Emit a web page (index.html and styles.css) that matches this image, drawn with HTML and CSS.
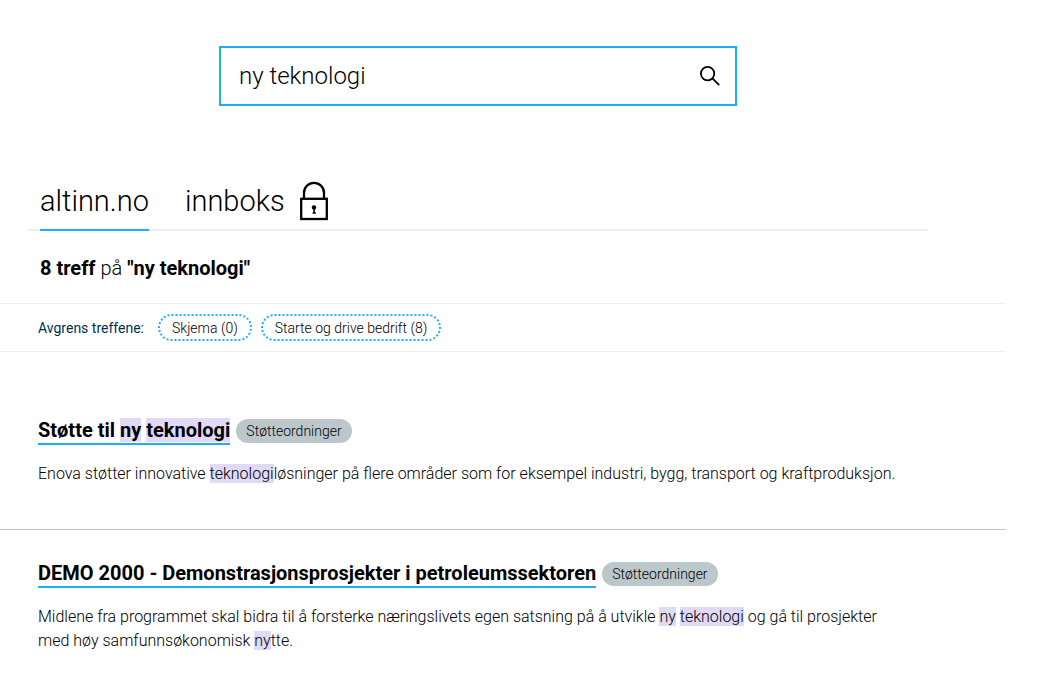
FILE: index.html
```html
<!DOCTYPE html>
<html lang="nb">
<head>
<meta charset="utf-8">
<meta name="viewport" content="width=device-width, initial-scale=1">
<title>Søk - altinn.no</title>
<link rel="stylesheet" href="styles.css">
</head>
<body>
<main class="page">
  <header class="top">
    <form class="search" role="search">
      <input class="search-input" type="text" aria-label="Søk" value="ny teknologi">
      <button class="search-button" type="submit" aria-label="Søk">
        <svg viewBox="0 0 22 22" width="22" height="22" fill="none" stroke="#000" stroke-width="1.8"><circle cx="8.6" cy="8.6" r="6.7"/><path d="M13.4 13.4 20.2 20.2"/></svg>
      </button>
    </form>
    <nav class="tabs">
      <a class="tab tab-active" href="#">altinn.no</a>
      <a class="tab" href="#">innboks
        <svg class="lock" viewBox="0 0 30 40" width="30" height="40"><path d="M5 18V11.8a10 10 0 0 1 20 0V18" fill="none" stroke="#000" stroke-width="2.3"/><rect x="2.2" y="17.8" width="25.6" height="20.2" fill="none" stroke="#000" stroke-width="2.3"/><circle cx="15" cy="26.4" r="2.2"/><path d="M14.3 26h1.6v5.2h1v1.6h-3.4v-1.4h.8z"/></svg>
      </a>
    </nav>
    <h1 class="summary">8 treff <span class="light">på</span> "ny teknologi"</h1>
  </header>
  <section class="filters">
    <span class="filter-label">Avgrens treffene:</span>
    <button class="filter" type="button">Skjema (0)</button>
    <button class="filter" type="button">Starte og drive bedrift (8)</button>
  </section>
  <section class="results">
    <article class="result">
      <div class="result-head">
        <h2 class="result-title"><a class="result-link" href="#">Støtte til <mark>ny</mark> <mark>teknologi</mark></a></h2>
        <span class="badge">Støtteordninger</span>
      </div>
      <p class="result-text">Enova støtter innovative <mark>teknologi</mark>løsninger på flere områder som for eksempel industri, bygg, transport og kraftproduksjon.</p>
    </article>
    <article class="result">
      <div class="result-head">
        <h2 class="result-title"><a class="result-link" href="#">DEMO 2000 - Demonstrasjonsprosjekter i petroleumssektoren</a></h2>
        <span class="badge">Støtteordninger</span>
      </div>
      <p class="result-text">Midlene fra programmet skal bidra til å forsterke næringslivets egen satsning på å utvikle <mark>ny</mark> <mark>teknologi</mark> og gå til prosjekter med høy samfunnsøkonomisk <mark>ny</mark>tte.</p>
    </article>
  </section>
</main>
</body>
</html>
```
FILE: styles.css
```css
* { box-sizing: border-box; }
body {
  margin: 0;
  background: #fff;
  color: #000;
  font-family: Roboto, "Liberation Sans", sans-serif;
  font-weight: 300;
}
.page { margin-right: 41px; }
.top { padding: 46px 78px 0 28px; }
.search {
  display: flex;
  align-items: center;
  width: 100%;
  max-width: 518px;
  height: 60px;
  margin: 0 auto;
  border: 2px solid #1eaef7;
}
.search-input {
  flex: 1;
  min-width: 0;
  height: 100%;
  padding: 0 18px;
  border: 0;
  outline: 0;
  background: none;
  color: #000;
  font: inherit;
  font-size: 24px;
}
.search-button {
  display: flex;
  padding: 0 14px;
  border: 0;
  background: none;
}
.tabs {
  display: flex;
  gap: 36px;
  margin-top: 72px;
  padding-left: 12px;
  border-bottom: 2px solid #eee;
}
.tab {
  display: flex;
  align-items: center;
  gap: 14px;
  height: 53px;
  margin-bottom: -2px;
  padding-bottom: 6px;
  border-bottom: 2px solid transparent;
  color: #000;
  font-size: 29px;
  text-decoration: none;
}
.tab-active { border-bottom-color: #1eaef7; }
.summary {
  margin: 0;
  padding: 25px 12px 22px;
  font-size: 20px;
  font-weight: 700;
  line-height: 25px;
}
.light { font-weight: 300; }
.filters {
  display: flex;
  align-items: center;
  flex-wrap: wrap;
  gap: 9px;
  padding: 10px 38px;
  border-top: 1px solid #eee;
  border-bottom: 1px solid #eee;
}
.filter-label {
  margin-right: 5px;
  color: #022f51;
  font-size: 14px;
  font-weight: 400;
}
.filter {
  height: 27px;
  padding: 0 12px;
  border: 2px dotted #1eaef7;
  border-radius: 14px;
  background: #fff;
  color: #000;
  font: inherit;
  font-size: 14px;
}
.results { padding-top: 35px; }
.result { padding: 31px 104px 43px 38px; }
.result + .result { border-top: 1px solid #bcc4c8; }
.result-head {
  display: flex;
  align-items: center;
  gap: 6px;
}
.result-title {
  margin: 0;
  font-size: 20px;
  font-weight: 700;
  line-height: 25px;
}
.result-link {
  display: block;
  border-bottom: 2px solid #1eaef7;
  color: #000;
  text-decoration: none;
}
mark { background: #e0daf7; color: inherit; }
.badge {
  margin-bottom: 2px;
  padding: 0 10px;
  border-radius: 12px;
  background: #bcc7cc;
  font-size: 14px;
  line-height: 24px;
}
.result-text {
  margin: 17px 0 0;
  font-size: 16px;
  line-height: 24px;
}
```
